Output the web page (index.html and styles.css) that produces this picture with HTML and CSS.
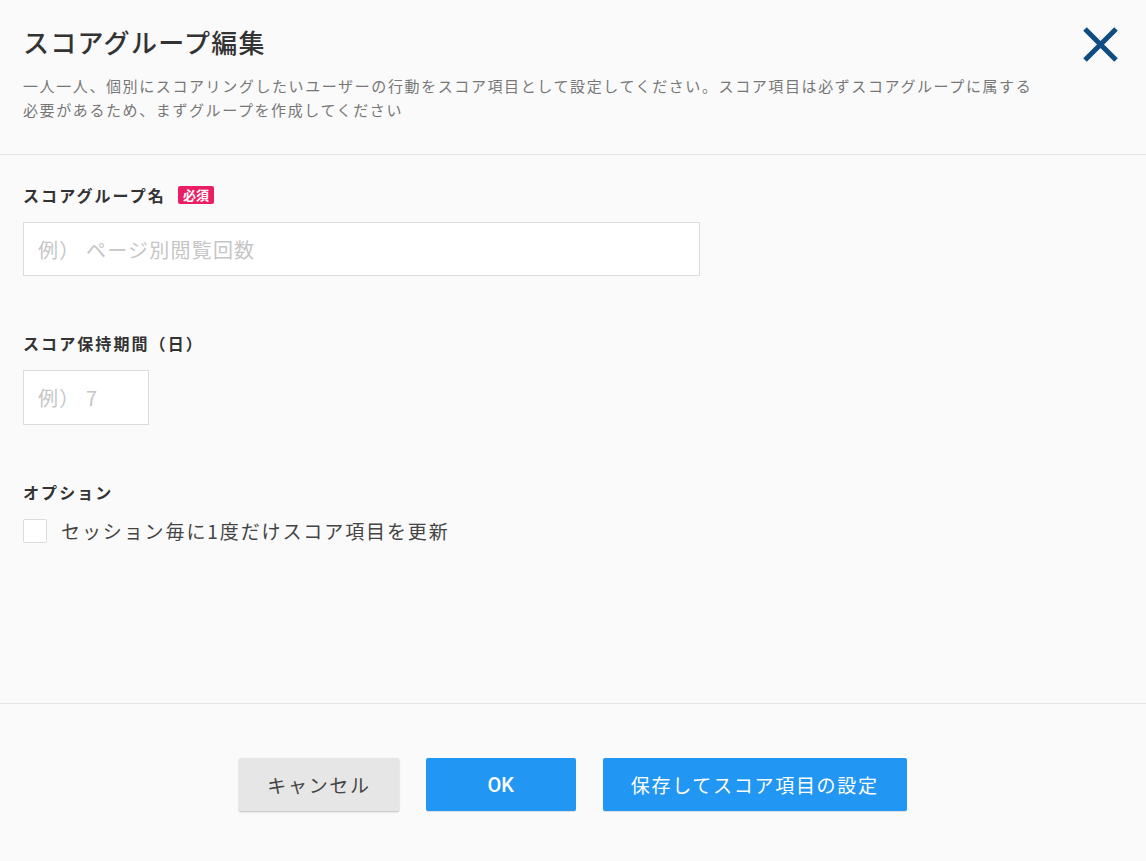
FILE: index.html
```html
<!DOCTYPE html>
<html lang="ja">
<head>
  <meta charset="UTF-8">
  <title>スコアグループ編集</title>
  <link rel="stylesheet" href="styles.css">
</head>
<body>
  <div class="dialog">
    <header class="dialog-head">
      <div class="head-text">
        <h1>スコアグループ編集</h1>
        <p class="lead">一人一人、個別にスコアリングしたいユーザーの行動をスコア項目として設定してください。スコア項目は必ずスコアグループに属する必要があるため、まずグループを作成してください</p>
      </div>
      <button class="close" aria-label="閉じる">
        <svg width="35" height="35" viewBox="0 0 35 35">
          <path d="M2 2 L33 33 M33 2 L2 33" stroke="#0f4c81" stroke-width="5" fill="none"/>
        </svg>
      </button>
    </header>

    <form class="dialog-body">
      <div class="field">
        <label class="field-label">スコアグループ名 <span class="badge">必須</span></label>
        <input class="text-input wide" type="text" placeholder="例） ページ別閲覧回数">
      </div>
      <div class="field">
        <label class="field-label">スコア保持期間（日）</label>
        <input class="text-input short" type="text" placeholder="例） 7">
      </div>
      <div class="field">
        <label class="field-label">オプション</label>
        <label class="check-row">
          <span class="check-box"></span>
          <span class="check-text">セッション毎に1度だけスコア項目を更新</span>
        </label>
      </div>
    </form>

    <footer class="dialog-foot">
      <button class="btn btn-cancel">キャンセル</button>
      <button class="btn btn-primary btn-ok">OK</button>
      <button class="btn btn-primary">保存してスコア項目の設定</button>
    </footer>
  </div>
</body>
</html>
```

FILE: styles.css
```css
* {
  margin: 0;
  padding: 0;
  box-sizing: border-box;
}
body {
  background: #fafafa;
  color: #333;
  font-family: "Noto Sans CJK JP", "Noto Sans", sans-serif;
  letter-spacing: 0.1em;
}
.dialog {
  display: flex;
  flex-direction: column;
  height: 100vh;
}
.dialog-head {
  display: flex;
  justify-content: space-between;
  align-items: flex-start;
  padding: 24px 28px 32px 23px;
  border-bottom: 1px solid #e4e4e4;
}
.dialog-head h1 {
  font-size: 26px;
  line-height: 36px;
  font-weight: 500;
  letter-spacing: 0.05em;
  color: #333;
}
.lead {
  margin-top: 14px;
  max-width: 1015px;
  font-size: 15px;
  line-height: 24px;
  color: #777;
}
.close {
  margin-top: 3px;
  width: 35px;
  height: 35px;
  border: none;
  background: none;
  cursor: pointer;
}
.close svg {
  display: block;
}
.dialog-body {
  flex: 1;
  padding: 28px 23px 0;
}
.field + .field {
  margin-top: 55px;
}
.field-label {
  display: flex;
  align-items: center;
  gap: 12px;
  font-size: 16px;
  line-height: 24px;
  font-weight: 700;
  letter-spacing: 0.13em;
  color: #333;
  margin-bottom: 15px;
}
.badge {
  display: inline-block;
  width: 36px;
  height: 18px;
  line-height: 18px;
  text-align: center;
  border-radius: 2px;
  background: #e91e63;
  color: #fff;
  font-size: 13px;
  letter-spacing: 0;
}
.text-input {
  display: block;
  height: 54px;
  padding: 0 14px;
  border: 1px solid #dcdcdc;
  background: #fff;
  font-family: inherit;
  font-size: 20px;
  letter-spacing: 0.06em;
  color: #333;
  outline: none;
}
.text-input::placeholder {
  color: #c6c6c6;
}
.wide {
  width: 677px;
}
.short {
  width: 126px;
  height: 55px;
}
.check-row {
  display: flex;
  align-items: center;
  gap: 14px;
  margin-top: 1px;
}
.check-box {
  width: 24px;
  height: 24px;
  border: 1px solid #dcdcdc;
  border-radius: 2px;
  background: #fff;
}
.check-text {
  font-size: 19px;
  line-height: 24px;
  letter-spacing: 0.1em;
  color: #444;
}
.dialog-foot {
  height: 158px;
  display: flex;
  justify-content: center;
  align-items: center;
  gap: 27px;
  padding-top: 4px;
  border-top: 1px solid #e4e4e4;
}
.btn {
  height: 53px;
  min-width: 150px;
  padding: 0 28px;
  border: none;
  border-radius: 2px;
  font-family: inherit;
  font-size: 19px;
  font-weight: 400;
  letter-spacing: 0.09em;
  cursor: pointer;
}
.btn-cancel {
  background: #e6e6e6;
  color: #444;
  box-shadow: 0 1px 2px rgba(0, 0, 0, 0.25);
}
.btn-primary {
  background: #2196f3;
  color: #fff;
  box-shadow: 0 1px 1px rgba(0, 0, 0, 0.12);
}
.btn-ok {
  font-family: Roboto, "Noto Sans", sans-serif;
  font-size: 20px;
  font-weight: 500;
  letter-spacing: 0;
}
```
